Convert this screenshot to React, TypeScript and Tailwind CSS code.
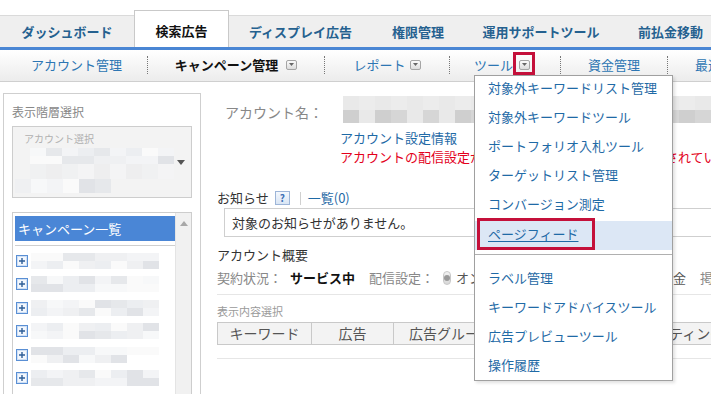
import React from 'react';

const tabs = [
  { label: 'ダッシュボード', w: 'w-[134px]' },
  { label: '検索広告', w: 'w-[95px]', active: true },
  { label: 'ディスプレイ広告', w: 'w-[143px]' },
  { label: '権限管理', w: 'w-[92px]' },
  { label: '運用サポートツール', w: 'w-[154px]' },
  { label: '前払金移動', w: 'w-[105px]' },
];

const menuTop = [
  '対象外キーワードリスト管理',
  '対象外キーワードツール',
  'ポートフォリオ入札ツール',
  'ターゲットリスト管理',
  'コンバージョン測定',
];
const menuBottom = ['ラベル管理', 'キーワードアドバイスツール', '広告プレビューツール', '操作履歴'];

const light = ['#eceef1', '#f3f4f6', '#e6e8eb', '#f7f8f9', '#e1e3e7', '#eff0f2', '#fafafa'];
const dark = ['#dedede', '#d6d6d6', '#e4e4e4', '#cfcfcf', '#dadada', '#e9e9e9'];

// pixelated "redacted" text
const Blur = ({ cols, seed, palette, h = 'h-[8px]' }: { cols: number; seed: number; palette: string[]; h?: string }) => (
  <div className="flex">
    {Array.from({ length: cols }).map((_, i) => (
      <div
        key={i}
        className={`w-[16px] ${h}`}
        style={{ background: palette[(i * 5 + seed * 3 + ((i * seed) % 4)) % palette.length] }}
      />
    ))}
  </div>
);

const DropIcon = () => (
  <span className="inline-flex w-[11px] h-[10px] items-center justify-center rounded-[2px] border border-[#a5a5a5] bg-linear-to-b from-[#fbfbfb] to-[#dcdcdc]">
    <svg width="5" height="3" viewBox="0 0 5 3">
      <path d="M0 0h5L2.5 3z" fill="#666" />
    </svg>
  </span>
);

const Plus = () => (
  <svg width="12" height="12" viewBox="0 0 12 12" className="shrink-0">
    <rect x="0.5" y="0.5" width="11" height="11" fill="#f3f7fd" stroke="#5a8fd4" />
    <rect x="1.5" y="1.5" width="9" height="9" fill="none" stroke="#cfe0f5" />
    <path d="M6 3v6M3 6h6" stroke="#2f5f98" strokeWidth="1.4" />
  </svg>
);

const Sep = () => <div className="h-[18px] border-l border-dotted border-[#777]" />;

export default function App() {
  return (
    <div className="relative w-[711px] h-[394px] overflow-hidden bg-white font-['Noto_Sans_CJK_JP','Noto_Sans',sans-serif]">
      {/* main tabs */}
      <div className="pt-[10px]">
        <div className="flex items-end h-[37px]">
          {tabs.map((t) =>
            t.active ? (
              <div
                key={t.label}
                className={`${t.w} shrink-0 h-[37px] pt-[3px] flex items-center justify-center bg-white border-x border-t border-[#c9c9c9] text-[13px] font-bold text-[#111]`}
              >
                {t.label}
              </div>
            ) : (
              <div
                key={t.label}
                className={`${t.w} shrink-0 h-[32px] flex items-center justify-center bg-[#efefef] border-t border-[#dadada] text-[13px] font-bold text-[#25618f]`}
              >
                {t.label}
              </div>
            )
          )}
          <div className="flex-1 h-[32px] bg-[#efefef] border-t border-[#dadada]" />
        </div>
        <div className="h-[3px] bg-[#4a86d4]" />
      </div>

      {/* sub navigation */}
      <div className="flex items-center h-[32px] pb-[2px] border-b border-[#cfcfcf] bg-linear-to-b from-white to-[#ececec] text-[13px] text-[#2d76b3]">
        <div className="w-[147px] shrink-0 flex justify-center pl-[6px]">アカウント管理</div>
        <Sep />
        <div className="w-[176px] shrink-0 flex items-center justify-center gap-[8px] font-bold text-[#111]">
          キャンペーン管理
          <DropIcon />
        </div>
        <Sep />
        <div className="w-[124px] shrink-0 flex items-center justify-center gap-[4px]">
          レポート
          <DropIcon />
        </div>
        <Sep />
        <div className="w-[110px] shrink-0 flex items-center justify-center gap-[6px] pr-[6px]">
          ツール
          <span className="relative inline-flex">
            <DropIcon />
            <span className="absolute -left-[6px] -top-[8px] w-[22px] h-[23px] border-[3px] border-[#c4103a]" />
          </span>
        </div>
        <Sep />
        <div className="w-[106px] shrink-0 flex justify-center">資金管理</div>
        <Sep />
        <div className="pl-[27px] whitespace-nowrap">最適化</div>
      </div>

      {/* body */}
      <div className="flex">
        <div className="ml-[3px] mt-[11px] w-[198px] h-[320px] shrink-0 border border-[#cfcfcf] pl-[8px]">
          <div className="pt-[9px] text-[12px] leading-[18px] text-[#888]">表示階層選択</div>
          <div className="relative mt-[5px] w-[180px] h-[72px] border border-[#cdcdcd] bg-[#f3f3f3]">
            <div className="pl-[11px] pt-[5px] text-[10px] leading-[14px] text-[#b0b0b0]">アカウント選択</div>
            <div className="ml-[17px] mt-[2px]">
              <Blur cols={9} seed={1} palette={light} />
              <Blur cols={9} seed={2} palette={light} />
              <Blur cols={9} seed={3} palette={['#f0f1f2', '#f4f4f5', '#eeeeef']} h="h-[15px]" />
            </div>
            <div className="ml-[2px]">
              <Blur cols={6} seed={4} palette={light} h="h-[14px]" />
            </div>
            <svg width="8" height="5" viewBox="0 0 8 5" className="absolute left-[164px] top-[33px]">
              <path d="M0 0h8L4 5z" fill="#555" />
            </svg>
          </div>

          <div className="mt-[14px] w-[180px] h-[200px] border border-[#cdcdcd] flex">
            <div className="w-[162px] pl-[2px] pt-[3px]">
              <div className="h-[25px] bg-[#4a86d6] pl-[3px] text-[13px] leading-[25px] text-white">キャンペーン一覧</div>
              <div className="mt-[4px] mb-[3px] border-t border-[#cfcfcf]" />
              {[0, 1, 2, 3, 4, 5].map((r) => (
                <div key={r} className="h-[23.5px] flex items-center gap-[3px] pl-[1px]">
                  <Plus />
                  <div>
                    <Blur cols={8} seed={r + 2} palette={light} />
                    <Blur cols={r === 4 ? 6 : 8} seed={r + 5} palette={light} />
                  </div>
                </div>
              ))}
            </div>
            <div className="flex-1 bg-[#f1f1f1] border-l border-[#e4e4e4] flex justify-center pt-[8px]">
              <svg width="8" height="5" viewBox="0 0 8 5">
                <path d="M4 0l4 5H0z" fill="#a8a8a8" />
              </svg>
            </div>
          </div>
        </div>

        {/* right content */}
        <div className="flex-1 min-w-0 pl-[16px] text-[13px]">
          <div className="mt-[14px] flex items-start">
            <div className="w-[126px] shrink-0 pl-[8px] pt-[6px] text-[14px] leading-[20px] text-[#888]">アカウント名：</div>
            <div className="shrink-0">
              <Blur cols={23} seed={1} palette={['#f2f2f2', '#ececec', '#f6f6f6', '#e9e9e9']} h="h-[14px]" />
              <Blur cols={23} seed={3} palette={dark} h="h-[13px]" />
            </div>
          </div>
          <div className="mt-[5px] pl-[123px] leading-[19px] whitespace-nowrap">
            <div className="text-[#1f6aa6]">アカウント設定情報</div>
            <div className="text-[#e3001b]">アカウントの配信設定がオフのため、広告の配信が停止されています</div>
          </div>

          <div className="mt-[22px] flex items-center h-[20px] whitespace-nowrap">
            <span className="text-[#333]">お知らせ</span>
            <span className="ml-[6px] w-[15px] h-[14px] flex items-center justify-center border border-[#9db5d8] bg-linear-to-b from-[#f4f8fd] to-[#d9e5f4] text-[10px] font-bold text-[#3d6fb5] leading-none">?</span>
            <span className="ml-[10px] h-[13px] border-l border-[#d0d0d0]" />
            <span className="ml-[7px] text-[#1f6aa6]">一覧(0)</span>
          </div>
          <div className="ml-[7px] h-[29px] w-[520px] border border-[#cfcfcf] pl-[7px] flex items-center text-[#333]">
            対象のお知らせがありません。
          </div>

          <div className="mt-[8px] leading-[20px] text-[#333]">アカウント概要</div>
          <div className="mt-[3px] h-[20px] flex items-center whitespace-nowrap">
            <span className="text-[#888]">契約状況：</span>
            <span className="ml-[8px] font-bold text-[#111]">サービス中</span>
            <span className="ml-[14px] text-[#888]">配信設定：</span>
            <span className="ml-[9px] w-[14px] h-[14px] rounded-full border border-[#c8c8c8] bg-linear-to-b from-[#f3f3f3] to-[#d8d8d8] flex items-center justify-center">
              <span className="w-[6px] h-[6px] rounded-full bg-[#9a9a9a]" />
            </span>
            <span className="ml-[5px] text-[#555]">オン</span>
            <span className="ml-[8px] w-[14px] h-[14px] rounded-full border border-[#c8c8c8] bg-white" />
            <span className="ml-[4px] text-[#555]">オフ</span>
            <span className="ml-[112px] text-[#555]">自動入金</span>
            <span className="ml-[14px] text-[#888]">掲載状況</span>
          </div>
          <div className="mt-[6px] border-t border-[#e6e6e6]" />
          <div className="mt-[8px] text-[11px] leading-[16px] text-[#9a9a9a]">表示内容選択</div>
          <div className="mt-[3px] flex h-[23px] whitespace-nowrap text-[#555] text-[14px]">
            <div className="w-[95px] shrink-0 border border-[#c9c9c9] bg-[#f3f3f3] flex items-center justify-center">キーワード</div>
            <div className="w-[82px] shrink-0 border-y border-r border-[#c9c9c9] bg-[#f3f3f3] flex items-center justify-center">広告</div>
            <div className="w-[114px] shrink-0 border-y border-r border-[#c9c9c9] bg-[#f3f3f3] flex items-center justify-center">広告グループ</div>
            <div className="w-[111px] shrink-0 border-y border-r border-[#c9c9c9] bg-[#f3f3f3] flex items-center justify-center">広告表示</div>
            <div className="w-[130px] shrink-0 border-y border-r border-[#c9c9c9] bg-[#f3f3f3] flex items-center pl-[8px]">ターゲティング</div>
          </div>
          <div className="mt-[13px] border-t border-[#e6e6e6]" />
        </div>
      </div>

      {/* tools dropdown menu */}
      <div className="absolute left-[474px] top-[75px] w-[199px] h-[306px] z-10 bg-white border border-[#a0a0a0] shadow-[2px_2px_3px_rgba(0,0,0,0.12)] text-[13px] text-[#1f6aa6]">
        {menuTop.map((m) => (
          <div key={m} className="h-[29px] flex items-center pl-[13px] pb-[5px] whitespace-nowrap">
            {m}
          </div>
        ))}
        <div className="relative h-[29px] flex items-center pl-[13px] pb-[3px] bg-[#dce7f5]">
          <span className="underline underline-offset-2">ページフィード</span>
          <span className="absolute left-[2px] -top-[3px] w-[118px] h-[32px] border-[3px] border-[#c4103a]" />
        </div>
        <div className="mt-[4px] border-t border-[#b0b0b0]" />
        <div className="mt-[8px]">
          {menuBottom.map((m) => (
            <div key={m} className="h-[29px] flex items-center pl-[13px] whitespace-nowrap">
              {m}
            </div>
          ))}
        </div>
      </div>
    </div>
  );
}
